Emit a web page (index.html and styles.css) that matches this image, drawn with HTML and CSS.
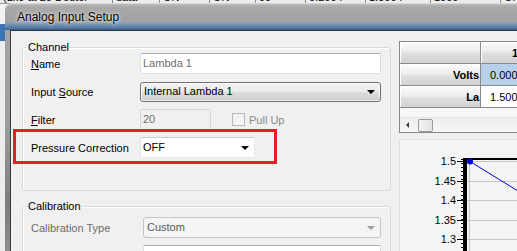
FILE: index.html
```html
<!DOCTYPE html>
<html lang="en">
<head>
  <meta charset="UTF-8">
  <title>Analog Input Setup</title>
  <link rel="stylesheet" href="styles.css">
</head>
<body>
  <div class="desk">
    <div class="bg-row">
      <span>(Lk0 at 20 Deuter</span><span>data</span><span>ON</span><span>ON</span><span>90</span><span>0.2004</span><span>1.5004</span><span>1000</span><span>ON</span>
    </div>

    <div class="window">
      <div class="titlebar">Analog Input Setup</div>
      <div class="client">
        <div class="left">
          <div class="group channel">
            <div class="group-title">Channel</div>
            <div class="row">
              <span class="lbl"><u>N</u>ame</span>
              <div class="textbox wide readonly">Lambda 1</div>
            </div>
            <div class="row">
              <span class="lbl">Input <u>S</u>ource</span>
              <div class="combo button wide">Internal Lambda 1</div>
            </div>
            <div class="row">
              <span class="lbl"><u>F</u>ilter</span>
              <div class="textbox short disabled">20</div>
              <span class="check"></span>
              <span class="check-lbl">Pull Up</span>
            </div>
            <div class="row">
              <span class="lbl">Pressure Correction</span>
              <div class="combo list mid">OFF</div>
            </div>
          </div>

          <div class="group calibration">
            <div class="group-title">Calibration</div>
            <div class="row first">
              <span class="lbl lbl-cal muted">Calibration Type</span>
              <div class="combo list off cal">Custom</div>
            </div>
            <div class="row">
              <span class="lbl lbl-cal muted">Units</span>
              <div class="textbox cal"></div>
            </div>
          </div>
        </div>

        <div class="right">
          <div class="grid">
            <table>
              <tr><th class="corner"></th><th class="colhead">1</th></tr>
              <tr><th class="rowhead">Volts</th><td class="sel">0.000</td></tr>
              <tr><th class="rowhead">La</th><td>1.500</td></tr>
            </table>
            <div class="grid-space"></div>
            <div class="hscroll">
              <span class="arrow-left"></span>
              <span class="thumb"></span>
            </div>
          </div>

          <div class="chart">
            <svg width="200" height="130" viewBox="0 0 200 130">
              <g stroke="#c6c6c6" stroke-width="1">
                <line x1="67" y1="21.5" x2="200" y2="21.5"/>
                <line x1="67" y1="41.5" x2="200" y2="41.5"/>
                <line x1="67" y1="60.5" x2="200" y2="60.5"/>
                <line x1="67" y1="80.5" x2="200" y2="80.5"/>
                <line x1="67" y1="99.5" x2="200" y2="99.5"/>
                <line x1="69.5" y1="19" x2="69.5" y2="130"/>
              </g>
              <g stroke="#000" stroke-width="1">
                <line x1="57" y1="21.5" x2="63" y2="21.5"/>
                <line x1="57" y1="41.5" x2="63" y2="41.5"/>
                <line x1="57" y1="60.5" x2="63" y2="60.5"/>
                <line x1="57" y1="80.5" x2="63" y2="80.5"/>
                <line x1="57" y1="99.5" x2="63" y2="99.5"/>
              </g>
              <line x1="62" y1="19" x2="62" y2="130" stroke="#000" stroke-width="2" stroke-dasharray="1 3"/>
              <rect x="63" y="18" width="4" height="112" fill="#000"/>
              <rect x="63" y="18" width="137" height="2" fill="#000"/>
              <line x1="70" y1="21.5" x2="200" y2="101.4" stroke="#0000e6" stroke-width="1"/>
              <circle cx="70" cy="21.5" r="3" fill="#0000e6"/>
              <g class="axis-text" text-anchor="end">
                <text x="56" y="25">1.5</text>
                <text x="56" y="45">1.45</text>
                <text x="56" y="64">1.4</text>
                <text x="56" y="84">1.35</text>
                <text x="56" y="103">1.3</text>
              </g>
            </svg>
          </div>
        </div>

        <div class="highlight"></div>
      </div>
    </div>
  </div>
</body>
</html>
```

FILE: styles.css
```css
html, body {
  margin: 0;
  width: 517px;
  height: 251px;
  overflow: hidden;
}
body {
  font-family: "Liberation Sans", Arial, sans-serif;
  font-size: 11px;
  color: #000;
  background: linear-gradient(to bottom, #f2f2f2 0, #f2f2f2 24px, #3c74b8 24px, #3c74b8 41px, #ececec 41px);
}
.desk {
  position: relative;
  display: flow-root;
  width: 517px;
  height: 251px;
}
.bg-row {
  display: grid;
  grid-template-columns: 113px 47px 50px 46px 50px 60px 65px 70px 60px;
  margin-top: -9px;
  height: 12px;
  line-height: 12px;
  background: #ececec;
  border-bottom: 1px solid #9a9a9a;
  white-space: nowrap;
  overflow: hidden;
}
.bg-row span {
  padding-left: 3px;
  border-right: 1px solid #8a8a8a;
  overflow: hidden;
}

/* dialog window */
.window {
  position: absolute;
  left: 5px;
  top: 3px;
  width: 640px;
  height: 300px;
  padding-left: 5px;
  border-radius: 7px 7px 0 0;
  border-top: 1px solid #d8d8d8;
  box-sizing: border-box;
  background: linear-gradient(to bottom, #bdbdbd 0, #a8a8a8 3px, #a3a3a3 15px, #9ea4ab 18px, #6f8fb3 21px, #4b6e96 25px, #37567a 26px, #a4a4a4 26px, #9d9d9d 120px, #7c7c7c 200px, #9a9a9a 280px);
  display: flex;
  flex-direction: column;
}
.titlebar {
  height: 26px;
  line-height: 26px;
  padding-left: 7px;
  font-size: 12px;
  text-shadow: 0 0 5px rgba(255, 255, 255, 0.9), 0 0 2px rgba(255, 255, 255, 0.7);
}
.client {
  position: relative;
  flex: 1;
  display: flex;
  background: #f0f0f0;
  border-left: 1px solid #3a3a3a;
  border-top: 1px solid #26364a;
}

/* left side */
.left {
  padding: 16px 0 0 11px;
}
.group {
  width: 369px;
  box-sizing: border-box;
  border: 1px solid #d5dbe0;
  border-radius: 3px;
  box-shadow: inset 1px 1px 0 #fff;
  padding: 0 8px 25px 8px;
  display: flex;
  flex-direction: column;
}
.group-title {
  align-self: flex-start;
  margin: -7px 0 0 -4px;
  padding: 0 1px;
  line-height: 12px;
  background: #f0f0f0;
}
.calibration {
  margin-top: 15px;
}
.row {
  display: flex;
  align-items: center;
  height: 21px;
  margin-bottom: 7px;
}
.row.first {
  margin-top: 5px;
}
.lbl {
  width: 109px;
  flex: none;
}
.lbl-cal {
  width: 112px;
}
.muted {
  color: #6d6d6d;
}

.textbox, .combo {
  box-sizing: border-box;
  height: 21px;
  line-height: 19px;
  padding-left: 2px;
  white-space: nowrap;
}
.textbox {
  background: #fff;
  border: 1px solid #dbdfe6;
  border-top-color: #abadb3;
  border-radius: 2px;
}
.textbox.readonly {
  color: #6d6d6d;
}
.textbox.disabled {
  background: #f0f0f0;
  color: #6d6d6d;
  border-color: #d5d5d5;
}
.wide {
  width: 241px;
}
.short {
  width: 71px;
}
.mid {
  width: 115px;
}
.cal {
  width: 238px;
}

.combo {
  display: flex;
  align-items: center;
  justify-content: space-between;
  padding-right: 5px;
}
.combo::after {
  content: "";
  border-left: 4px solid transparent;
  border-right: 4px solid transparent;
  border-top: 4px solid #000;
}
.combo.button {
  height: 20px;
  padding-left: 3px;
  border: 1px solid #707070;
  border-radius: 3px;
  background: linear-gradient(to bottom, #f2f2f2 0, #ebebeb 50%, #dddddd 50%, #cfcfcf 100%);
  box-shadow: inset 0 0 0 1px rgba(255, 255, 255, 0.7);
}
.combo.list {
  background: #fff;
  border: 1px solid #e3e6ea;
  border-top-color: #c6c9ce;
  border-radius: 2px;
}
.combo.off {
  background: #f4f4f4;
  color: #595959;
  padding-left: 3px;
  border: 1px solid #c4c4c4;
  border-radius: 3px;
}
.combo.off::after {
  border-top-color: #9a9a9a;
}

.check {
  width: 13px;
  height: 13px;
  box-sizing: border-box;
  margin-left: 21px;
  border: 1px solid #b8b8b8;
  background: linear-gradient(135deg, #ececec, #fbfbfb);
}
.check-lbl {
  margin-left: 4px;
  color: #8a8a8a;
}

/* right side */
.right {
  padding: 10px 0 0 8px;
}
.grid {
  width: 200px;
  border: 1px solid #828790;
  background: #f7f7f7;
}
.grid table {
  border-collapse: collapse;
}
.grid th, .grid td {
  height: 21px;
  padding: 0;
  border: 1px solid #8a8a8a;
  border-top: none;
  border-left: none;
}
.grid th {
  width: 79px;
  background: linear-gradient(to bottom, #fbfbfb 0, #ececec 45%, #dedede 55%, #d2d2d2 100%);
  box-shadow: inset 1px 1px 0 #fff;
  font-weight: bold;
  text-align: right;
  padding-right: 1px;
}
.grid th.colhead {
  width: 80px;
  text-align: left;
  padding-left: 31px;
}
.grid td {
  background: #fff;
  padding-left: 9px;
  width: 80px;
  border-right: none;
}
.grid td.sel {
  background: #b9d0ea;
}
.grid-space {
  height: 9px;
}
.hscroll {
  height: 14px;
  display: flex;
  align-items: center;
  background: linear-gradient(to bottom, #eeeeee, #f6f6f6);
  border-top: 1px solid #e2e2e2;
}
.arrow-left {
  margin-left: 6px;
  border-top: 3px solid transparent;
  border-bottom: 3px solid transparent;
  border-right: 3px solid #3a3a3a;
}
.thumb {
  margin-left: 9px;
  width: 15px;
  height: 13px;
  box-sizing: border-box;
  border: 1px solid #9a9a9a;
  border-radius: 2px;
  background: linear-gradient(to right, #f3f3f3, #e2e2e2);
}
.chart {
  margin-top: 6px;
  width: 200px;
  height: 140px;
  background: #f4f4f4;
  border-top: 1px solid #dedede;
  border-left: 1px solid #dedede;
}
.chart svg {
  display: block;
}
.axis-text {
  font-family: "Liberation Sans", Arial, sans-serif;
  font-size: 11px;
  fill: #000;
}

/* red annotation box */
.highlight {
  position: absolute;
  left: 2px;
  top: 98px;
  width: 264px;
  height: 35px;
  box-sizing: border-box;
  border: 3px solid #ec1c24;
}
```
